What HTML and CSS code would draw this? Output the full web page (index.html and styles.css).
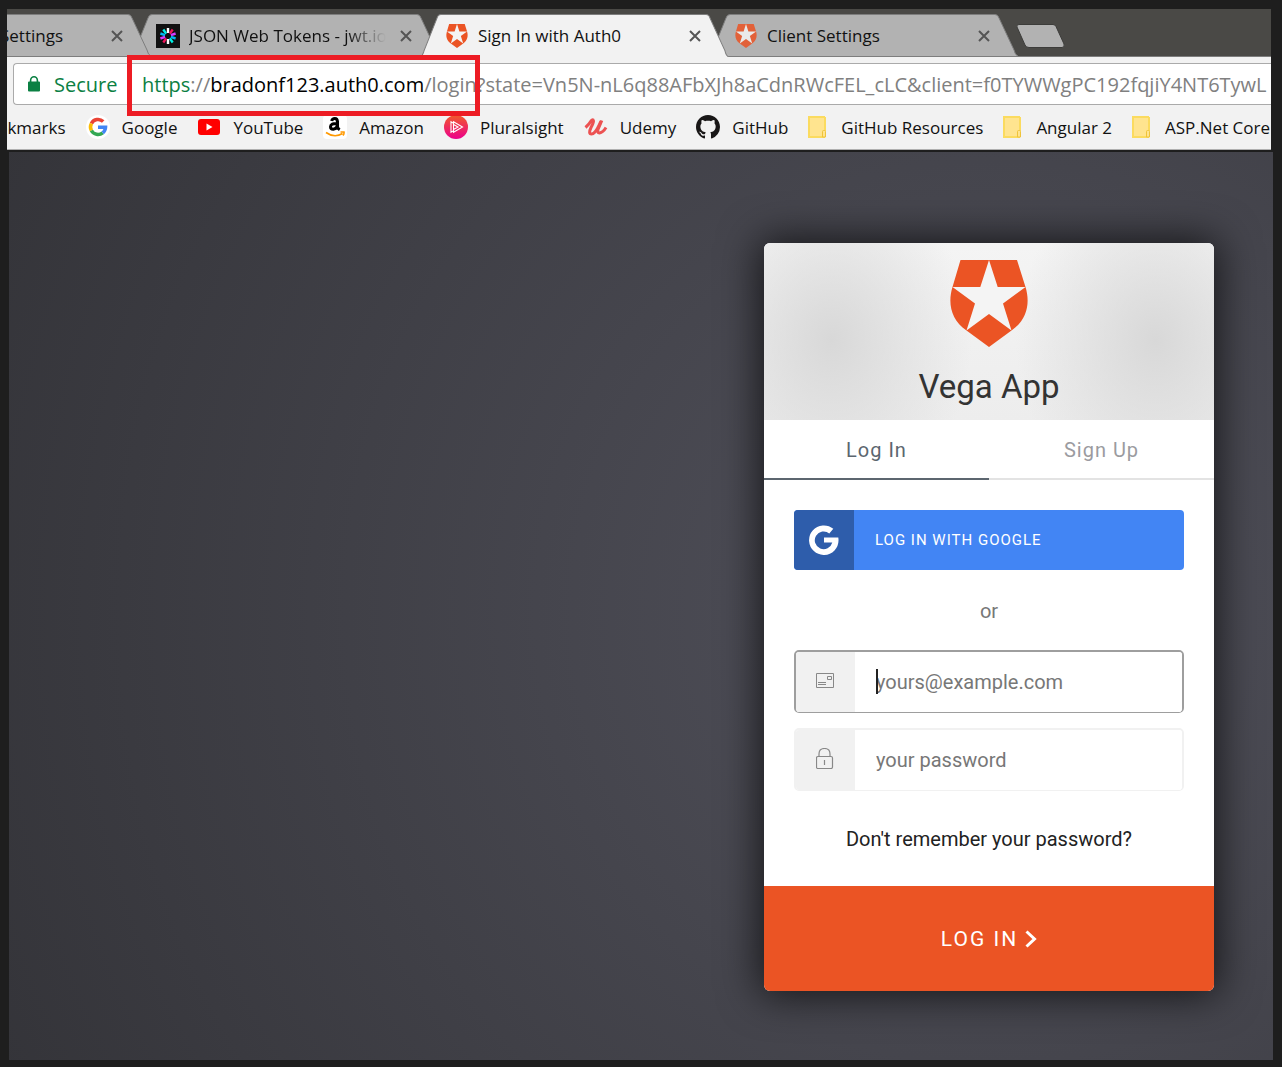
FILE: index.html
```html
<!DOCTYPE html>
<html lang="en">
<head>
<meta charset="utf-8">
<title>Sign In with Auth0</title>
<link rel="stylesheet" href="styles.css">
</head>
<body>
<svg class="defs" aria-hidden="true">
  <defs>
    <symbol id="auth0" viewBox="0 0 78 87">
      <path d="M10.500 0H67L75.500 27C80.500 43 77 60 61.500 70.500L39 87L16.500 70.500C1 60-2.500 43 2.500 27Z" fill="#eb5424"/>
      <path class="star" d="M39 0L47.700 27H75.500L53 43.500L61.500 70.500L39 54L16.500 70.500L25 43.500L2.500 27H30.300Z"/>
    </symbol>
    <symbol id="close" viewBox="0 0 12 12"><path d="M1 1L11 11M11 1L1 11" fill="none" stroke="#555" stroke-width="2"/></symbol>
    <symbol id="tab-shape" viewBox="0 0 309 42" preserveAspectRatio="none">
      <path d="M0 42C3 41 3 39 4 36L17 4Q18 .5 21 .5H286Q289 .5 290 4L305 36Q306 41 309 42" stroke="#7d7d7d"/>
    </symbol>
    <symbol id="folder" viewBox="0 0 19 23">
      <path d="M1 1H17V15H15V21H1Z" fill="#ffe48f"/>
      <path d="M0 1H17M1 1V21H17M17 1V15" fill="none" stroke="#fbdb5f" stroke-width="2"/>
      <path d="M14.500 21V15.500Q14.500 14.500 15.500 14.500H16.500Q17.500 14.500 17.500 15.500V21Z" fill="#ffe48f" stroke="#efc33a"/>
    </symbol>
  </defs>
</svg>

<div class="browser">
  <header class="chrome">
    <nav class="tabs" aria-label="Tabs">
      <div class="tab tab-first">
        <svg class="tab-bg"><use href="#tab-shape"/></svg>
        <span class="tab-title">Settings</span>
        <button class="tab-close" aria-label="Close tab"><svg><use href="#close"/></svg></button>
      </div>
      <div class="tab">
        <svg class="tab-bg"><use href="#tab-shape"/></svg>
        <svg class="favicon" viewBox="0 0 24 24">
          <path d="M0 0H24V24H0Z" fill="#111"/>
          <g stroke-width="2.400" fill="none">
            <path d="M12 4V9M12 15V20" stroke="#fff"/>
            <path d="M16.700 5.500L13.800 9.600M7.300 18.500L10.200 14.400" stroke="#f0145a"/>
            <path d="M19.600 9.500L14.900 11.100M4.400 14.500L9.100 12.900" stroke="#d63aff"/>
            <path d="M19.600 14.500L14.900 12.900M4.400 9.500L9.100 11.100" stroke="#00b9f1"/>
            <path d="M16.700 18.500L13.800 14.400M7.300 5.500L10.200 9.600" stroke="#00f2e6"/>
          </g>
        </svg>
        <span class="tab-title fade">JSON Web Tokens - jwt.io</span>
        <button class="tab-close" aria-label="Close tab"><svg><use href="#close"/></svg></button>
      </div>
      <div class="tab tab-active">
        <svg class="tab-bg"><use href="#tab-shape"/></svg>
        <svg class="favicon"><use href="#auth0"/></svg>
        <span class="tab-title">Sign In with Auth0</span>
        <button class="tab-close" aria-label="Close tab"><svg><use href="#close"/></svg></button>
      </div>
      <div class="tab">
        <svg class="tab-bg"><use href="#tab-shape"/></svg>
        <svg class="favicon dim"><use href="#auth0"/></svg>
        <span class="tab-title">Client Settings</span>
        <button class="tab-close" aria-label="Close tab"><svg><use href="#close"/></svg></button>
      </div>
      <button class="new-tab" aria-label="New tab">
        <svg viewBox="0 0 50 24"><path d="M3 .5H37Q39 .5 40 2.500L48 20Q49 23.500 46 23.500H13Q10 23.500 9 21L1 3Q0 .5 3 .5Z" fill="#b2b2b2" stroke="#3c3c3a"/></svg>
      </button>
    </nav>

    <div class="toolbar">
      <div class="omnibox">
        <svg class="lock" viewBox="0 0 12 16"><path d="M0 6.500Q0 5.500 1 5.500H1.800V4.500A4.200 4.500 0 0 1 10.200 4.500V5.500H11Q12 5.500 12 6.500V14.500Q12 15.500 11 15.500H1Q0 15.500 0 14.500ZM3.400 5.500H8.600V4.500A2.600 2.900 0 0 0 3.400 4.500Z" fill="#0b8043" fill-rule="evenodd"/></svg>
        <span class="secure">Secure</span>
        <span class="url"><span class="scheme">https</span>://<span class="host">bradonf123.auth0.com</span>/login?state=Vn5N-nL6q88AFbXJh8aCdnRWcFEL_cLC&amp;client=f0TYWWgPC192fqjiY4NT6TywL</span>
      </div>
      <div class="highlight"></div>
    </div>

    <nav class="bookmarks" aria-label="Bookmarks">
      <a class="bookmark" href="#">Bookmarks</a>
      <a class="bookmark" href="#">
        <svg class="mark" viewBox="0 0 24 24"><circle cx="12" cy="12" r="12" fill="#fff"/><g fill="none" stroke-width="3.600"><path d="M17.200 6.500A7.500 7.500 0 0 0 5.400 8.500" stroke="#ea4335"/><path d="M5.400 8.500A7.500 7.500 0 0 0 5.400 15.500" stroke="#fbbc05"/><path d="M5.400 15.500A7.500 7.500 0 0 0 16.700 17.800" stroke="#34a853"/><path d="M12 12.200H19.500A7.500 7.500 0 0 1 16.700 17.800" stroke="#4285f4"/></g></svg>
        Google</a>
      <a class="bookmark" href="#">
        <svg class="mark" viewBox="0 0 24 24"><rect x="1" y="4" width="22" height="16" rx="3" fill="#f00"/><path d="M9.500 8.500V15.500L15.500 12Z" fill="#fff"/></svg>
        YouTube</a>
      <a class="bookmark" href="#">
        <svg class="mark" viewBox="0 0 24 24"><rect width="24" height="24" rx="4" fill="#fff"/><path d="M14.500 7.500Q14.500 3.600 11.800 3.600Q9.300 3.600 8.700 6M14.500 8.500Q7.500 8 7.500 11.800Q7.500 14.300 10.200 14.300Q14.500 13.600 14.500 8.500M14.500 6V11.500Q14.500 13.500 16.700 14.800" fill="none" stroke="#000" stroke-width="3"/><path d="M3 17.500Q11.500 23.500 19.500 18.500M17.500 17H21Q21.300 19 20 20.500" fill="none" stroke="#f90" stroke-width="1.600"/></svg>
        Amazon</a>
      <a class="bookmark" href="#">
        <svg class="mark" viewBox="0 0 24 24"><defs><linearGradient id="ps" x1="0" y1="0" x2="0" y2="1"><stop offset="0" stop-color="#f15b2a"/><stop offset="1" stop-color="#ec008c"/></linearGradient></defs><circle cx="12" cy="12" r="12" fill="url(#ps)"/><path d="M7 6.800V17.200L9.500 15.800V8.200ZM9.500 6.800L18.500 12L9.500 17.200ZM9.500 9.500L14 12L9.500 14.500" fill="none" stroke="#fff" stroke-width="1.100"/></svg>
        Pluralsight</a>
      <a class="bookmark" href="#">
        <svg class="mark" viewBox="0 0 24 24"><path d="M1.500 12.500Q5 9.500 7 6Q9 3.500 9.500 6Q9.500 8 7 12.500Q4 19 7.500 19Q11 19 15 10.500L17 6" fill="none" stroke="#ec5252" stroke-width="3"/><path d="M17.800 5.500L14 14.500Q13 18 15.500 18Q19 17.500 22 12.500" fill="none" stroke="#ec5252" stroke-width="3"/></svg>
        Udemy</a>
      <a class="bookmark" href="#">
        <svg class="mark" viewBox="0 0 16 16"><path fill="#191717" fill-rule="evenodd" d="M8 0C3.580 0 0 3.580 0 8c0 3.540 2.290 6.530 5.470 7.590.4.070.55-.17.55-.38 0-.19-.01-.82-.01-1.490-2.010.37-2.530-.49-2.690-.94-.09-.23-.48-.94-.82-1.130-.28-.15-.68-.52-.01-.53.63-.01 1.080.58 1.230.82.72 1.210 1.870.87 2.330.66.07-.52.28-.87.51-1.070-1.780-.2-3.640-.89-3.640-3.950 0-.87.31-1.590.82-2.150-.08-.2-.36-1.020.08-2.120 0 0 .67-.21 2.200.82.64-.18 1.320-.27 2-.27s1.360.09 2 .27c1.530-1.040 2.200-.82 2.200-.82.44 1.100.16 1.920.08 2.120.51.56.82 1.270.82 2.150 0 3.070-1.870 3.750-3.650 3.950.29.25.54.73.54 1.480 0 1.070-.01 1.930-.01 2.200 0 .21.15.46.55.38A8.010 8.010 0 0 0 16 8c0-4.420-3.580-8-8-8Z"/></svg>
        GitHub</a>
      <a class="bookmark folder" href="#"><svg><use href="#folder"/></svg>GitHub Resources</a>
      <a class="bookmark folder" href="#"><svg><use href="#folder"/></svg>Angular 2</a>
      <a class="bookmark folder" href="#"><svg><use href="#folder"/></svg>ASP.Net Core</a>
    </nav>
  </header>

  <main class="page">
    <form class="card">
      <header class="card-head">
        <svg class="logo"><use href="#auth0"/></svg>
        <h1>Vega App</h1>
      </header>
      <div class="modes">
        <button type="button" class="mode current">Log In</button>
        <button type="button" class="mode">Sign Up</button>
      </div>
      <div class="fields">
        <button type="button" class="google">
          <span class="google-icon"><svg viewBox="0 0 30 30"><path d="M24.300 3.800L20.300 8.400A8.900 8.900 0 1 0 23.300 17.600H15V12.400H29.300Q30.500 20 25.500 25.500A14.800 14.800 0 1 1 24.300 3.800Z" fill="#fff"/></svg></span>
          <span class="google-text">LOG IN WITH GOOGLE</span>
        </button>
        <p class="or">or</p>
        <div class="field focused">
          <label for="email" aria-label="Email"><svg viewBox="0 0 18 15"><path d="M.5 .5H17.500V14.500H.5ZM11.500 3.500H15.500V6.500H11.500ZM2 9.500H10M2 11.500H10" fill="none" stroke="#888"/></svg></label>
          <input id="email" type="email" placeholder="yours@example.com">
          <span class="caret"></span>
        </div>
        <div class="field">
          <label for="password" aria-label="Password"><svg class="padlock" viewBox="0 0 18 21"><path d="M3 8V6Q3 .5 8.500 .5Q14 .5 14 6V8M2 8.500H15Q16.500 8.500 16.500 10V19Q16.500 20.500 15 20.500H2Q.5 20.500 .5 19V10Q.5 8.500 2 8.500ZM8.500 12V17" fill="none" stroke="#888" stroke-width="1.200"/></svg></label>
          <input id="password" type="password" placeholder="your password">
        </div>
        <a class="forgot" href="#">Don't remember your password?</a>
      </div>
      <button type="submit" class="submit">LOG IN <svg viewBox="0 0 12 18"><path d="M1.500 1.500L9.500 9L1.500 16.500" fill="none" stroke="#fff" stroke-width="3"/></svg></button>
    </form>
  </main>
</div>
</body>
</html>
```

FILE: styles.css
```css
* { box-sizing: border-box; }

body {
  margin: 0;
  background: #1e1e1e;
  font-family: Roboto, "Liberation Sans", sans-serif;
}

button {
  margin: 0;
  padding: 0;
  border: 0;
  background: none;
  font: inherit;
  color: inherit;
}

svg { display: block; flex: none; }
.defs { position: absolute; width: 0; height: 0; }
.star { fill: #f4f4f4; }

.browser {
  display: flex;
  flex-direction: column;
  min-height: 100vh;
  padding: 9px 9px 7px 7px;
}

/* Browser chrome */
.chrome {
  margin-right: 2px;
  overflow: hidden;
  background: #f2f2f2;
  border-bottom: 1px solid #b0b0b0;
  color: #111;
  font-family: "Open Sans", "Noto Sans", sans-serif;
  font-size: 17px;
  white-space: nowrap;
}

.tabs {
  display: flex;
  height: 48px;
  padding-top: 5px;
  background: #4a4946;
  border-bottom: 1px solid #7d7d7d;
}

.tab {
  position: relative;
  z-index: 1;
  display: flex;
  flex: none;
  align-items: center;
  width: 289px;
  height: 43px;
  padding: 0 17px 0 16px;
}

.tab-bg {
  position: absolute;
  z-index: -1;
  top: 0;
  left: -9px;
  width: 309px;
  height: 42px;
  fill: #b2b2b2;
}

.tab-first { z-index: 2; justify-content: flex-end; margin-left: -156px; }
.tab-first .tab-title { flex: none; margin-right: 48px; }
.tab-active { z-index: 3; }
.tab-active .tab-bg { height: 43px; fill: #f2f2f2; }
.favicon { width: 24px; height: 24px; margin-right: 9px; }
.dim { opacity: .85; }
.tab-title { flex: 1; overflow: hidden; }
.fade {
  margin-right: 14px;
  mask-image: linear-gradient(to right, #000 80%, transparent);
}
.tab-close svg { width: 12px; height: 12px; }
.new-tab { align-self: flex-start; margin: 10px 0 0 9px; }
.new-tab svg { width: 50px; height: 24px; }

.toolbar { position: relative; padding: 6px 0 0 6px; }

.omnibox {
  display: flex;
  align-items: center;
  height: 42px;
  padding-left: 14px;
  border: 1px solid #aaa;
  border-right: 0;
  border-radius: 4px 0 0 4px;
  background: #fff;
  font-size: 20px;
}

.lock { width: 12px; height: 16px; margin-right: 14px; }
.secure { width: 88px; }
.secure, .scheme { color: #0b8043; }
.url { color: #808080; }
.host { color: #000; }

.highlight {
  position: absolute;
  top: -2px;
  left: 120px;
  z-index: 4;
  width: 353px;
  height: 61px;
  border: 5px solid #ed1c24;
}

.bookmarks {
  display: flex;
  align-items: center;
  gap: 20px;
  height: 44px;
  margin-left: -31px;
}

.bookmark {
  display: flex;
  align-items: center;
  gap: 12px;
  color: #111;
  text-decoration: none;
}

.mark { width: 24px; height: 24px; }
.folder { gap: 14px; }
.folder svg { width: 19px; height: 23px; }

/* Login page */
.page {
  display: flex;
  flex: 1;
  justify-content: flex-end;
  align-items: flex-start;
  margin: 2px 0 0 2px;
  padding: 91px 59px 69px 0;
  background: radial-gradient(circle 1093px at 980px 460px, #51515b, #343439);
}

.card {
  width: 450px;
  border-radius: 6px;
  overflow: hidden;
  background: #fff;
  box-shadow: 0 0 40px 4px rgba(0, 0, 0, .7);
}

.card-head {
  display: flex;
  flex-direction: column;
  align-items: center;
  height: 177px;
  padding-top: 17px;
  background:
    radial-gradient(ellipse 140px 170px at 15% 55%, #d8d8d8, transparent),
    radial-gradient(ellipse 140px 170px at 87% 55%, #d8d8d8, transparent),
    linear-gradient(#f4f4f4, #ededed);
}

.logo { width: 80px; height: 87px; }

h1 {
  margin: 20px 0 0;
  color: #333;
  font-size: 33px;
  font-weight: 400;
  line-height: 40px;
}

.modes { display: flex; }

.mode {
  flex: 1;
  height: 60px;
  padding-top: 2px;
  border-bottom: 2px solid #e3e3e3;
  color: #9b9ba0;
  font-size: 20px;
  letter-spacing: 1px;
}

.current { border-color: #5c666f; color: #5c666f; }

.fields { display: flex; flex-direction: column; padding: 30px 30px 32px; }

.google {
  display: flex;
  align-items: center;
  height: 60px;
  border-radius: 4px;
  overflow: hidden;
  background: #4285f4;
  color: #fff;
  font-size: 15px;
  letter-spacing: 1px;
}

.google-icon {
  display: grid;
  place-items: center;
  width: 60px;
  height: 60px;
  margin-right: 21px;
  background: #2e5dab;
}

.google-icon svg { width: 30px; height: 30px; }

.or {
  margin: 26px 0 24px;
  color: #777;
  font-size: 20px;
  line-height: 30px;
  text-align: center;
}

.field {
  position: relative;
  display: flex;
  height: 63px;
  margin-bottom: 15px;
  border: 2px solid #f1f1f1;
  border-bottom-width: 1px;
  border-radius: 5px;
  overflow: hidden;
}

.focused { border-color: #9e9e9e; }

.field label {
  display: grid;
  place-items: center;
  width: 59px;
  padding: 0 2px 4px 0;
  background: #f1f1f1;
}

.field label svg { width: 18px; height: 15px; }
.field label .padlock { height: 21px; }

.field input {
  flex: 1;
  min-width: 0;
  padding: 0 21px;
  border: 0;
  outline: 0;
  background: #fff;
  font: 20px Roboto, sans-serif;
}

.field input::placeholder { color: #777; }

.caret {
  position: absolute;
  top: 17px;
  left: 80px;
  width: 2px;
  height: 25px;
  background: #222;
}

.forgot {
  margin-top: 18px;
  color: #222;
  font-size: 20px;
  line-height: 30px;
  text-align: center;
  text-decoration: none;
}

.submit {
  display: flex;
  justify-content: center;
  align-items: center;
  gap: 7px;
  width: 100%;
  height: 105px;
  background: #eb5424;
  color: #fff;
  font-size: 21px;
  letter-spacing: 2px;
}

.submit svg { width: 12px; height: 18px; }
```
